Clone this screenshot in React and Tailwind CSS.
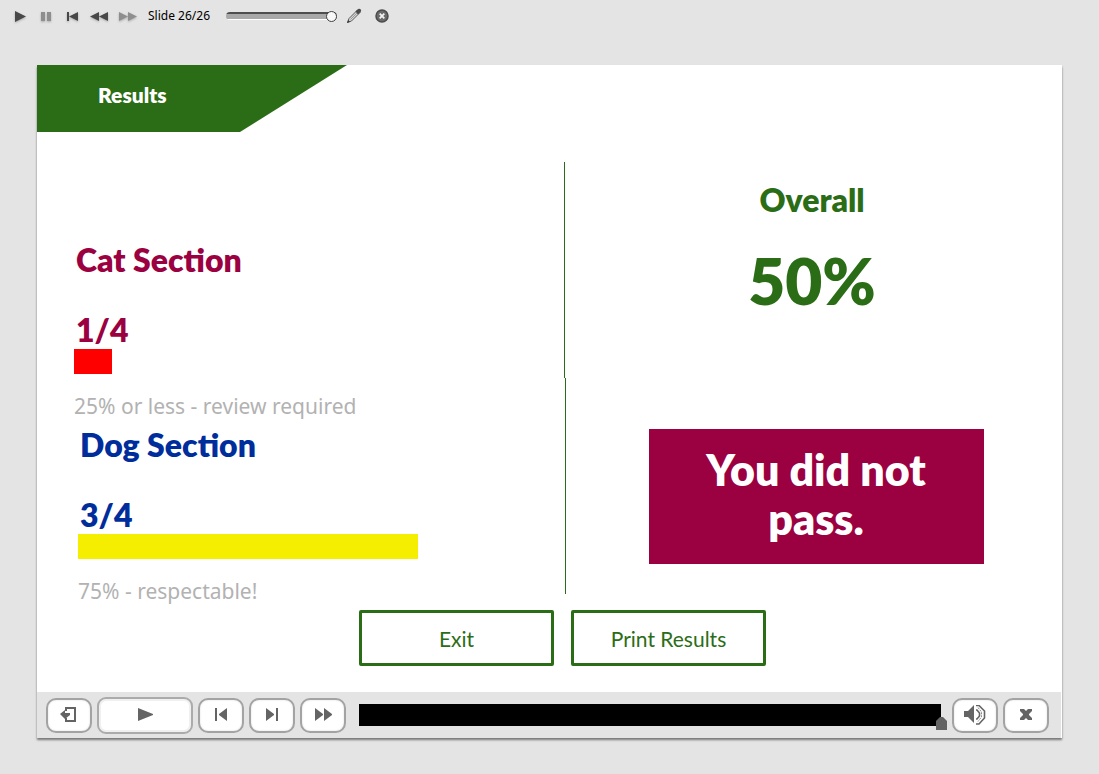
import React, { useState } from "react";

const TOTAL_SLIDES = 26;

const sections = [
  {
    name: "Cat Section",
    score: "1/4",
    note: "25% or less - review required",
    indent: "pl-[37px]",
    text: "text-[#9b0040]",
    bar: "w-[38px] bg-[#fe0000]",
  },
  {
    name: "Dog Section",
    score: "3/4",
    note: "75% - respectable!",
    indent: "pl-[41px]",
    text: "text-[#002d9c]",
    bar: "w-[340px] bg-[#f6ee00]",
  },
];

const topButtons = [
  { label: "Play", d: "M9 5 L20 10.5 L9 16 Z", color: "text-[#484848]" },
  { label: "Pause", d: "M8 6 H12 V15 H8 Z M14 6 H18 V15 H14 Z", color: "text-[#8e8e8e]" },
  { label: "First slide", d: "M7 6 H9 V15 H7 Z M18 6 V15 L9 10.5 Z", color: "text-[#484848]" },
  { label: "Rewind", d: "M12 6 V15 L3 10.5 Z M21 6 V15 L12 10.5 Z", color: "text-[#484848]" },
  { label: "Fast forward", d: "M5 6 L14 10.5 L5 15 Z M14 6 L23 10.5 L14 15 Z", color: "text-[#8e8e8e]" },
];

const ControlButton = ({ label, wide, children }) => (
  <button
    aria-label={label}
    className={
      wide
        ? "flex h-[37px] w-24 shrink-0 items-center justify-center rounded-[9px] border-2 border-[#ababab] bg-white shadow-[inset_0_0_0_2px_#f0f0f0]"
        : "flex h-[35px] w-[46px] shrink-0 items-center justify-center rounded-[10px] border-2 border-[#a3a3a3] bg-white shadow-[inset_0_0_2px_#d8d8d8]"
    }
  >
    <svg width="26" height="20" viewBox="0 0 26 20" className="fill-[#646464] stroke-none">
      {children}
    </svg>
  </button>
);

const SectionResult = ({ section }) => (
  <section className={`flex flex-col items-start ${section.indent}`}>
    <h2 className={`pl-0.5 text-[32px] leading-[38px] font-extrabold ${section.text}`}>{section.name}</h2>
    <p className={`mt-8 pl-0.5 text-[32px] leading-[38px] font-extrabold ${section.text}`}>{section.score}</p>
    <div className={`h-[25px] ${section.bar}`} />
    <p className="mt-[18px] font-['Noto_Sans',sans-serif] text-[21px] leading-7 text-[#b2b2b2]">{section.note}</p>
  </section>
);

const TopToolbar = () => {
  const [slide, setSlide] = useState(TOTAL_SLIDES);

  return (
    <header className="flex h-8 items-center pl-1.5 font-['Noto_Sans',sans-serif] text-xs text-black">
      {topButtons.map((button) => (
        <button key={button.label} aria-label={button.label} className={`w-[27px] ${button.color}`}>
          <svg width="27" height="20" viewBox="0 0 27 20" className="fill-current drop-shadow-[0_1px_1px_#aaaaaa]">
            <path d={button.d} />
          </svg>
        </button>
      ))}
      <label htmlFor="slide" className="ml-[7px] w-[78px] whitespace-nowrap">
        Slide {slide}/{TOTAL_SLIDES}
      </label>
      <input
        id="slide"
        type="range"
        min="1"
        max={TOTAL_SLIDES}
        value={slide}
        onChange={(e) => setSlide(Number(e.target.value))}
        className="h-2 w-[111px] appearance-none rounded-sm bg-[linear-gradient(#4d4d4d_0_2px,#a8a8a8_2px_7px,#ffffff_7px)] [&::-webkit-slider-thumb]:size-[11px] [&::-webkit-slider-thumb]:appearance-none [&::-webkit-slider-thumb]:rounded-full [&::-webkit-slider-thumb]:border [&::-webkit-slider-thumb]:border-[#3f3f3f] [&::-webkit-slider-thumb]:bg-[#f8f8f8]"
      />
      <button aria-label="Annotate" className="ml-2">
        <svg width="18" height="18" viewBox="0 0 18 18">
          <path d="M2.5 15.5 L4 11.5 L12.5 3 L15 5.5 L6.5 14 Z" fill="#d4d4d4" stroke="#5a5a5a" />
          <path d="M10.5 4.5 L13 2 Q15 1 16 3 Q16.5 4 15.5 5 L13 7.5 Z" fill="#4a4a4a" />
          <path d="M2 16 L3.2 13 L5 14.8 Z" fill="#3a3a3a" />
          <path d="M5.5 12.5 L12 6" stroke="#9a9a9a" />
        </svg>
      </button>
      <button aria-label="Close" className="ml-[11px]">
        <svg width="16" height="16" viewBox="0 0 16 16">
          <circle cx="8" cy="8" r="6" fill="#6a6a6a" stroke="#4b4b4b" strokeWidth="1.5" />
          <path d="M5.7 5.7 L10.3 10.3 M10.3 5.7 L5.7 10.3" stroke="#f2f2f2" strokeWidth="1.8" />
        </svg>
      </button>
    </header>
  );
};

const PlayerControls = () => {
  const [position, setPosition] = useState(100);

  return (
    <footer className="mr-px mb-px flex h-[46px] items-center gap-[5px] bg-[#e4e4e4] pr-3 pl-[9px]">
      <ControlButton label="Exit course">
        <path d="M9 2 H20 V17 H9 V13 H11 V15 H18 V4 H11 V6 H9 Z M4 9 L9 5 V8 H14 V10 L9 14 Z" />
      </ControlButton>
      <ControlButton label="Play slide" wide>
        <path d="M6 3 L21 9 V10 L6 16 Z" />
      </ControlButton>
      <ControlButton label="Previous slide">
        <path d="M7 3 H9 V16 H7 Z M19 3 V16 L11 10 V9 Z" />
      </ControlButton>
      <ControlButton label="Next slide">
        <path d="M7 3 L15 9 V10 L7 16 Z M17 3 H19 V16 H17 Z" />
      </ControlButton>
      <ControlButton label="Skip forward">
        <path d="M5 3 L13 9 V10 L5 16 Z M14 3 L22 9 V10 L14 16 Z" />
      </ControlButton>
      <input
        type="range"
        aria-label="Timeline"
        min="0"
        max="100"
        value={position}
        onChange={(e) => setPosition(Number(e.target.value))}
        className="mt-1 ml-2 h-[26px] min-w-0 flex-1 appearance-none bg-[linear-gradient(#000000,#000000)] bg-[length:calc(100%-6px)_22px] bg-no-repeat [&::-webkit-slider-runnable-track]:h-[26px] [&::-webkit-slider-thumb]:mt-[13px] [&::-webkit-slider-thumb]:h-[13px] [&::-webkit-slider-thumb]:w-[11px] [&::-webkit-slider-thumb]:appearance-none [&::-webkit-slider-thumb]:bg-[#646464] [&::-webkit-slider-thumb]:[clip-path:polygon(0_4px,4px_0,7px_0,100%_4px,100%_100%,0_100%)]"
      />
      <ControlButton label="Volume">
        <path d="M2 6 H6 L12 0 V18 L6 12 H2 Z" />
        <path
          d="M14 5 H15 L17.5 8 V11 L15 14 H14 M14 0.5 H17 L22.5 6 V13 L17 19 H14"
          fill="none"
          stroke="#646464"
          strokeWidth="1.6"
        />
        <path d="M16 2.5 L19.5 7 V12 L16 16.5" fill="none" stroke="#8a8a8a" strokeDasharray="2 1" />
      </ControlButton>
      <ControlButton label="Close player">
        <path d="M7 4 H11 L13 6 L15 4 H19 V6 L16 9 V10 L19 13 V15 H15 L13 13 L11 15 H7 V13 L10 10 V9 L7 6 Z" />
      </ControlButton>
    </footer>
  );
};

const App = () => {
  return (
    <div className="min-h-screen bg-[#e4e4e4] pb-[34px] font-['Lato',sans-serif]">
      <TopToolbar />

      <main className="mx-[37px] mt-[33px] bg-white shadow-[0_2px_2px_#777777]">
        <h1 className="h-[67px] w-[310px] bg-[#2b6d16] pl-[61px] text-[21px] leading-[60px] font-extrabold text-white [clip-path:polygon(0_0,100%_0,203px_100%,0_100%)]">
          Results
        </h1>

        <div className="grid grid-cols-[527fr_2px_496fr]">
          <div className="flex flex-col gap-1.5 pt-[109px]">
            {sections.map((section) => (
              <SectionResult key={section.name} section={section} />
            ))}
          </div>

          {/* divider leans very slightly to the right */}
          <svg width="2" height="432" viewBox="0 0 2 432" className="mt-[30px] fill-[#2b6d16]">
            <path d="M0 0 H1 V216 H2 V432 H1 V216 H0 Z" />
          </svg>

          <div className="flex flex-col items-center pt-12 pr-1 font-extrabold">
            <h2 className="text-[32px] leading-10 text-[#2b6d16]">Overall</h2>
            <p className="mt-[19px] text-[64px] leading-[84px] text-[#2b6d16]">50%</p>
            <p className="mt-[106px] ml-2 flex h-[135px] w-[335px] items-center justify-center bg-[#9b0040] px-10 pb-1.5 text-center text-[43px] leading-[49px] text-white">
              You did not pass.
            </p>
          </div>
        </div>

        <div className="flex justify-center gap-[17px] pt-[5px] pb-[26px] pl-[26px] text-[21px] text-[#2b6d16]">
          <button className="h-14 w-[195px] rounded-xs border-3 border-[#2b6d16] pt-0.5">Exit</button>
          <button className="h-14 w-[195px] rounded-xs border-3 border-[#2b6d16] pt-0.5">Print Results</button>
        </div>

        <PlayerControls />
      </main>
    </div>
  );
};

export default App;
